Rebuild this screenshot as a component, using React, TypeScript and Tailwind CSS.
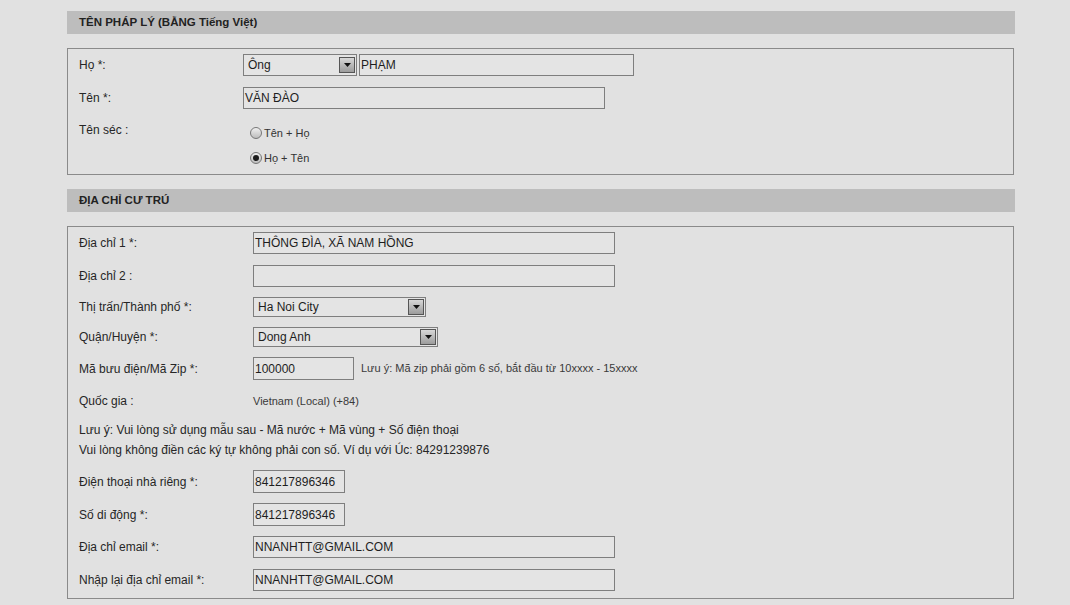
import React from "react";

// Form đăng ký: tên pháp lý + địa chỉ cư trú, giao diện cổ điển xám.

const font = { fontFamily: '"Liberation Sans", Arial, sans-serif' };

function SectionHeader({ title }: { title: string }) {
  return (
    <div className="flex h-[23px] items-center bg-[#bdbdbd] pl-3 text-[11.5px] font-bold text-[#222]">
      {title}
    </div>
  );
}

function TextBox({ value = "", width, height = 22 }: { value?: string; width: number; height?: number }) {
  return (
    <div
      className="flex shrink-0 items-center border border-[#7e7e7e] bg-[#e4e4e4] pl-[1px] text-[12px] text-[#1e1e1e]"
      style={{ width, height }}
    >
      {value}
    </div>
  );
}

function DropButton() {
  return (
    <div className="m-[1px] flex h-[16px] w-[16px] items-center justify-center border border-[#555] bg-gradient-to-b from-[#d8d8d8] to-[#9c9c9c]">
      <svg width="7" height="4" viewBox="0 0 7 4">
        <path d="M0 0h7L3.5 4z" fill="#111" />
      </svg>
    </div>
  );
}

function SelectBox({ value, width, height = 20 }: { value: string; width: number; height?: number }) {
  return (
    <div
      className="flex shrink-0 items-center justify-between border border-[#7e7e7e] bg-[#e4e4e4] text-[12px] text-[#1e1e1e]"
      style={{ width, height }}
    >
      <span className="pl-1">{value}</span>
      <DropButton />
    </div>
  );
}

function Radio({ checked, label }: { checked?: boolean; label: string }) {
  return (
    <div className="flex items-center gap-[2px] text-[11px] text-[#333]">
      <span className="flex h-[12px] w-[12px] items-center justify-center rounded-full border border-[#777] bg-gradient-to-b from-[#f0f0f0] to-[#bdbdbd]">
        {checked && <span className="h-[6px] w-[6px] rounded-full bg-[#1c1c1c]" />}
      </span>
      <span>{label}</span>
    </div>
  );
}

function Row({ label, labelW, children, mt }: { label: string; labelW: number; children: React.ReactNode; mt: number }) {
  return (
    <div className="flex items-center" style={{ marginTop: mt }}>
      <div className="shrink-0 text-[12px] text-[#262626]" style={{ width: labelW }}>
        {label}
      </div>
      {children}
    </div>
  );
}

export default function App() {
  return (
    <div className="min-h-[605px] w-full bg-[#e1e1e1] pl-[67px] pt-[11px]" style={font}>
      <div className="flex w-[948px] flex-col">
        <SectionHeader title="TÊN PHÁP LÝ (BẰNG Tiếng Việt)" />

        <div className="mt-[14px] h-[127px] w-[947px] border border-[#8a8a8a] pl-[11px] pt-[5px]">
          <Row label="Họ *:" labelW={164} mt={0}>
            <div className="flex items-center gap-[2px]">
              <SelectBox value="Ông" width={114} height={22} />
              <TextBox value="PHẠM" width={275} />
            </div>
          </Row>
          <Row label="Tên *:" labelW={164} mt={11}>
            <TextBox value="VĂN ĐÀO" width={362} />
          </Row>
          <div className="mt-[11px] flex">
            <div className="w-[164px] shrink-0 text-[12px] leading-[20px] text-[#262626]">Tên séc :</div>
            <div className="flex flex-col gap-[8px] pl-[7px] pt-[5px]">
              <Radio label="Tên + Họ" />
              <Radio checked label="Họ + Tên" />
            </div>
          </div>
        </div>

        <div className="mt-[14px]">
          <SectionHeader title="ĐỊA CHỈ CƯ TRÚ" />
        </div>

        <div className="mt-[14px] h-[373px] w-[947px] border border-[#8a8a8a] pl-[11px] pt-[5px]">
          <Row label="Địa chỉ 1 *:" labelW={174} mt={0}>
            <TextBox value="THÔNG ĐÌA, XÃ NAM HỒNG" width={362} />
          </Row>
          <Row label="Địa chỉ 2 :" labelW={174} mt={11}>
            <TextBox width={362} />
          </Row>
          <Row label="Thị trấn/Thành phố *:" labelW={174} mt={10}>
            <SelectBox value="Ha Noi City" width={173} />
          </Row>
          <Row label="Quận/Huyện *:" labelW={174} mt={10}>
            <SelectBox value="Dong Anh" width={185} />
          </Row>
          <Row label="Mã bưu điện/Mã Zip *:" labelW={174} mt={10}>
            <TextBox value="100000" width={101} height={23} />
            <span className="pl-[7px] text-[11px] text-[#3a3a3a]">
              Lưu ý: Mã zip phải gồm 6 số, bắt đầu từ 10xxxx - 15xxxx
            </span>
          </Row>
          <Row label="Quốc gia :" labelW={174} mt={10}>
            <div className="flex h-[22px] items-center text-[11px] text-[#3a3a3a]">Vietnam (Local) (+84)</div>
          </Row>
          <div className="mt-[8px] text-[12px] leading-[20px] text-[#262626]">
            <div>Lưu ý: Vui lòng sử dụng mẫu sau - Mã nước + Mã vùng + Số điện thoại</div>
            <div>Vui lòng không điền các ký tự không phải con số. Ví dụ với Úc: 84291239876</div>
          </div>
          <Row label="Điện thoại nhà riêng *:" labelW={174} mt={10}>
            <TextBox value="841217896346" width={92} height={23} />
          </Row>
          <Row label="Số di động *:" labelW={174} mt={10}>
            <TextBox value="841217896346" width={92} height={23} />
          </Row>
          <Row label="Địa chỉ email *:" labelW={174} mt={10}>
            <TextBox value="NNANHTT@GMAIL.COM" width={362} />
          </Row>
          <Row label="Nhập lại địa chỉ email *:" labelW={174} mt={11}>
            <TextBox value="NNANHTT@GMAIL.COM" width={362} />
          </Row>
        </div>
      </div>
    </div>
  );
}
